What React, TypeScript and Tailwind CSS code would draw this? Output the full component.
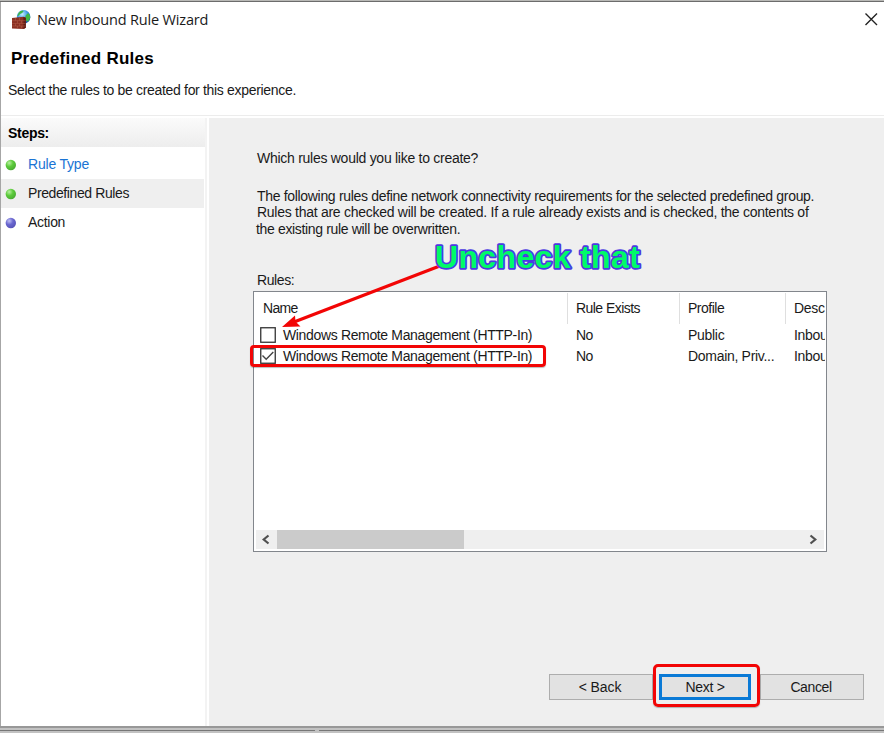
import type { ReactNode } from 'react';

const ui = "font-['Liberation_Sans',Arial,sans-serif]";

function FirewallIcon() {
  return (
    <svg width="20" height="20" viewBox="0 0 20 20" className="block">
      <defs>
        <radialGradient id="globe" cx="0.4" cy="0.3" r="0.75">
          <stop offset="0" stopColor="#c4efff" />
          <stop offset="0.5" stopColor="#3d9be6" />
          <stop offset="1" stopColor="#124a9c" />
        </radialGradient>
      </defs>
      <circle cx="12.6" cy="6.9" r="6.8" fill="url(#globe)" />
      <path d="M9.1 1.3 11.6 .5l1 .8-1.5 1.8-2 .8-1.8 2-1 .2Q6.8 3.1 9.1 1.3ZM14.6 5.6l2.5-2.6q2.3 2 2.2 4.6l-2 4-2.2-.8-.9-2.7Z" fill="#3fb845" />
      <path d="M1 8 12.5 6.8l2.3 1v10L12.5 19 1 18.5Z" fill="#8b3022" />
      <path d="M12.4 6.9 14.8 7.8v10L12.5 19Z" fill="#5e1c14" />
      <path d="M1 10.7h13.5M1 13.4h13.5M1 16h13.5M4.5 8v2.7M8.5 7.6v3.1M6.5 10.7v2.7M10.5 10.7v2.7M4.5 13.4v2.6M8.5 13.4v2.6M6.5 16v2.4M10.5 16v2.4" stroke="#b5604c" strokeWidth="0.5" fill="none" />
    </svg>
  );
}

function Bullet({ color }: { color: 'green' | 'blue' }) {
  const c = color === 'green' ? ['#b8f0a0', '#5ccb3b', '#47a632'] : ['#c0c0f4', '#6a67d0', '#5450b4'];
  return (
    <svg width="12" height="12" viewBox="0 0 12 12" className="block shrink-0">
      <defs>
        <radialGradient id={color} cx="0.35" cy="0.3" r="0.8">
          <stop offset="0" stopColor={c[0]} />
          <stop offset="0.45" stopColor={c[1]} />
          <stop offset="1" stopColor={c[2]} />
        </radialGradient>
      </defs>
      <circle cx="5.8" cy="6" r="5.2" fill={`url(#${color})`} />
    </svg>
  );
}

function Step({ color, className, children }: { color: 'green' | 'blue'; className: string; children: ReactNode }) {
  return (
    <li className={`flex h-[29px] w-[203px] items-center gap-[11px] pl-1 ${className}`}>
      <Bullet color={color} />
      <span className="mb-[2px]">{children}</span>
    </li>
  );
}

function Check({ checked = false }: { checked?: boolean }) {
  return (
    <svg width="16" height="16" viewBox="0 0 16 16" className="block shrink-0">
      <rect x="0.75" y="0.75" width="14.5" height="14.5" fill="#fff" stroke="#333" strokeWidth="1.3" />
      {checked && <path d="M2.5 7.5 6.2 11.2 13.3 4" fill="none" stroke="#444" strokeWidth="1.4" />}
    </svg>
  );
}

const cols = 'grid grid-cols-[314px_112px_106px_39px]';

function Row({ checked, profile }: { checked?: boolean; profile: string }) {
  return (
    <div className={`${cols} h-[21.5px] items-center whitespace-nowrap`}>
      <div className="flex items-center gap-[7px] pl-[6px]">
        <Check checked={checked} />
        <span className="tracking-[-0.35px]">Windows Remote Management (HTTP-In)</span>
      </div>
      <span className="pl-[8px] tracking-[-0.6px]">No</span>
      <span className="pl-[8px] tracking-[-0.3px]">{profile}</span>
      <span className="overflow-hidden pl-[8px] tracking-[-0.3px]">Inbound</span>
    </div>
  );
}

export default function App() {
  return (
    <div className={`${ui} relative flex h-[733px] w-[884px] flex-col overflow-hidden bg-[#c2c2c2] text-[14px] leading-4 text-[#1a1a1a]`}>
      <div className="h-[2px] shrink-0 border-b border-[#6c6c6c] bg-[#b9b9b6]" />
      <div className="flex h-[724px] shrink-0 flex-col border-l border-[#a6a6a6] bg-white">
        <header className="h-[113px] shrink-0">
          <div className="flex h-[36px] items-center pl-[10px] pr-[5px]">
            <FirewallIcon />
            <h1 className="ml-[6px] flex-1 font-['Open_Sans',sans-serif] text-[14.5px] tracking-[-0.17px]">New Inbound Rule Wizard</h1>
            <svg width="15" height="15" viewBox="0 0 15 15" className="mb-px">
              <path d="M1.5 1.5 13 13M13 1.5 1.5 13" stroke="#222" strokeWidth="1.4" fill="none" />
            </svg>
          </div>
          <h2 className="mt-[11px] pl-[10px] text-[17px] font-bold leading-5 tracking-[0.26px] text-black">Predefined Rules</h2>
          <p className="mt-[13px] pl-[7px] tracking-[-0.32px]">Select the rules to be created for this experience.</p>
        </header>
        <div className="h-px shrink-0 bg-[#ececec]" />
        <div className="flex flex-1 pt-[2px]">
          <aside className="w-[206px] shrink-0 border-r-2 border-[#f3f3f3]">
            <h3 className="flex h-[29px] items-center bg-linear-to-b from-[#fbfbfb] to-[#ededed] pl-[7px] font-bold tracking-[-0.3px] text-black">Steps:</h3>
            <ul className="pt-[3px]">
              <Step color="green" className="tracking-[-0.2px] text-[#1a74d4]">Rule Type</Step>
              <Step color="green" className="bg-[#efefef] tracking-[-0.4px]">Predefined Rules</Step>
              <Step color="blue" className="tracking-[-0.3px]">Action</Step>
            </ul>
          </aside>
          <main className="ml-[2px] flex flex-1 flex-col bg-[#efefef] pl-[44px] pr-[20px]">
            <p className="mt-[32px] pl-1 tracking-[-0.27px]">Which rules would you like to create?</p>
            <p className="mt-[22px] h-[49px] whitespace-nowrap pl-1 leading-[16.3px]">
              <span className="block tracking-[-0.32px]">The following rules define network connectivity requirements for the selected predefined group.</span>
              <span className="block tracking-[-0.27px]">Rules that are checked will be created. If a rule already exists and is checked, the contents of</span>
              <span className="-ml-px block tracking-[-0.34px]">the existing rule will be overwritten.</span>
            </p>
            <p className="mt-[35px] pl-1 tracking-[-0.4px]">Rules:</p>
            <section className="mt-[3px] flex h-[261px] w-[574px] flex-col overflow-hidden border border-[#82868c] bg-white">
              <div className={`${cols} mt-px h-[31px] shrink-0`}>
                <span className="border-r border-[#dfdfdf] pl-[9px] leading-[31px] tracking-[-0.7px]">Name</span>
                <span className="border-r border-[#dfdfdf] pl-[8px] leading-[31px] tracking-[-0.55px]">Rule Exists</span>
                <span className="border-r border-[#dfdfdf] pl-[8px] leading-[31px] tracking-[-0.5px]">Profile</span>
                <span className="overflow-hidden pl-[8px] leading-[31px] tracking-[-0.3px]">Description</span>
              </div>
              <div className="flex-1">
                <Row profile="Public" />
                <Row checked profile="Domain, Priv..." />
              </div>
              <div className="mx-[2px] mb-[2px] flex h-[19px] shrink-0 items-center bg-[#efefef]">
                <svg width="21" height="19" viewBox="0 0 21 19">
                  <path d="M12.5 5.5 7.7 9.5 12.5 13.5" stroke="#505050" strokeWidth="2.2" fill="none" />
                </svg>
                <div className="h-[19px] w-[187px] bg-[#cbcbcb]" />
                <svg width="21" height="19" viewBox="0 0 21 19" className="ml-auto">
                  <path d="M7.5 5.5 12.3 9.5 7.5 13.5" stroke="#505050" strokeWidth="2.2" fill="none" />
                </svg>
              </div>
            </section>
            <footer className="mt-[122px] flex justify-end">
              <button className="h-[26px] w-[104px] border border-[#adadad] bg-[#e2e2e2] pr-[2px] tracking-[-0.1px]">&lt; Back</button>
              <button className="ml-[6px] h-[26px] w-[92px] border-[3px] border-[#0a7ad6] bg-[#e2e2e2] tracking-[-0.3px]">Next &gt;</button>
              <button className="ml-[9px] h-[26px] w-[104px] border border-[#adadad] bg-[#e2e2e2] pr-[2px] tracking-[-0.4px]">Cancel</button>
            </footer>
          </main>
        </div>
      </div>
      <div className="h-[2px] shrink-0 bg-[#989898]" />
      <div className="mt-[2px] flex shrink-0 gap-[4px]">
        <div className="h-px w-[315px] bg-[#777]" />
        <div className="h-px flex-1 bg-[#777]" />
      </div>

      <div className="absolute left-[250px] top-[345px] h-[22px] w-[296px] rounded-[4px] border-[3px] border-[#f20505] shadow-[0_1px_1px_#0004]" />
      <div className="absolute left-[653px] top-[664px] h-[43px] w-[107px] rounded-[5px] border-[3px] border-[#f20505] shadow-[0_1px_1px_#0004]" />
      <svg className="absolute left-[275px] top-[235px]" width="375" height="100" viewBox="275 235 375 100">
        <path d="M441 265.5 294 322" stroke="#f20505" strokeWidth="3.2" />
        <path d="M282 327 295 315.5 295.5 321.5 300.5 326.5Z" fill="#f20505" />
        <text
          x="435"
          y="267.5"
          className="fill-[#00fb67] stroke-[#4b3ae2] stroke-[3.4px] text-[32px] font-bold tracking-[0.35px] [paint-order:stroke] [stroke-linejoin:round]"
        >
          Uncheck that
        </text>
      </svg>
    </div>
  );
}
